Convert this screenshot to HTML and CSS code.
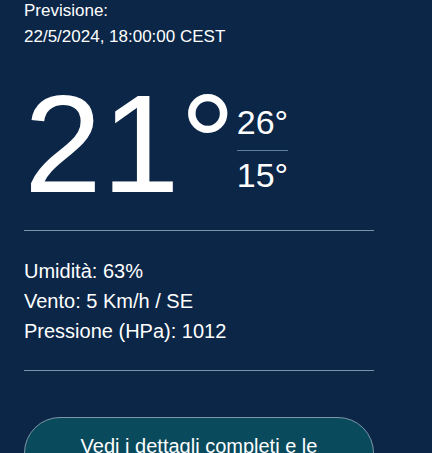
FILE: index.html
```html
<!DOCTYPE html>
<html lang="it">
<head>
<meta charset="utf-8">
<title>Previsione meteo</title>
<link rel="stylesheet" href="styles.css">
</head>
<body>
<main class="card">
  <div class="forecast">
    <p class="forecast-label">Previsione:</p>
    <p class="forecast-date">22/5/2024, 18:00:00 CEST</p>
  </div>
  <div class="temps">
    <span class="temp-now">21°</span>
    <div class="temp-range">
      <span class="temp-max">26°</span>
      <span class="temp-min">15°</span>
    </div>
  </div>
  <hr class="sep">
  <ul class="details">
    <li>Umidità: 63%</li>
    <li>Vento: 5 Km/h / SE</li>
    <li>Pressione (HPa): 1012</li>
  </ul>
  <hr class="sep sep-bottom">
  <a class="cta" href="#">Vedi i dettagli completi e le previsioni orarie</a>
</main>
</body>
</html>
```
FILE: styles.css
```css
html, body {
  margin: 0;
  padding: 0;
  height: 100%;
  overflow: hidden;
}
body {
  background: #0b2647;
  color: #ffffff;
  font-family: "Liberation Sans", Arial, sans-serif;
}
.card {
  width: 350px;
  padding-left: 24px;
}
.forecast {
  margin-top: -2px;
  font-size: 17px;
  line-height: 26px;
}
.forecast p {
  margin: 0;
}
.temps {
  display: flex;
  align-items: flex-start;
  margin-top: 24px;
}
.temp-now {
  font-size: 140px;
  line-height: 140px;
}
.temp-range {
  display: flex;
  flex-direction: column;
  margin-top: 29px;
  margin-left: 1px;
  font-size: 34px;
}
.temp-max {
  padding-bottom: 8px;
  border-bottom: 1px solid #5f7e9f;
}
.temp-min {
  padding-top: 5px;
}
.sep {
  margin: 16px 0 0;
  border: 0;
  height: 1px;
  background: #7b93aa;
}
.details {
  list-style: none;
  margin: 25px 0 0;
  padding: 0;
  font-size: 20px;
  line-height: 30px;
}
.sep-bottom {
  margin-top: 24px;
}
.cta {
  display: block;
  margin-top: 46px;
  padding: 17px 24px;
  border: 1px solid #7d97a6;
  border-radius: 36px;
  background: #0a4a5d;
  color: #ffffff;
  text-decoration: none;
  text-align: center;
  font-size: 20px;
  line-height: 23px;
}
```
